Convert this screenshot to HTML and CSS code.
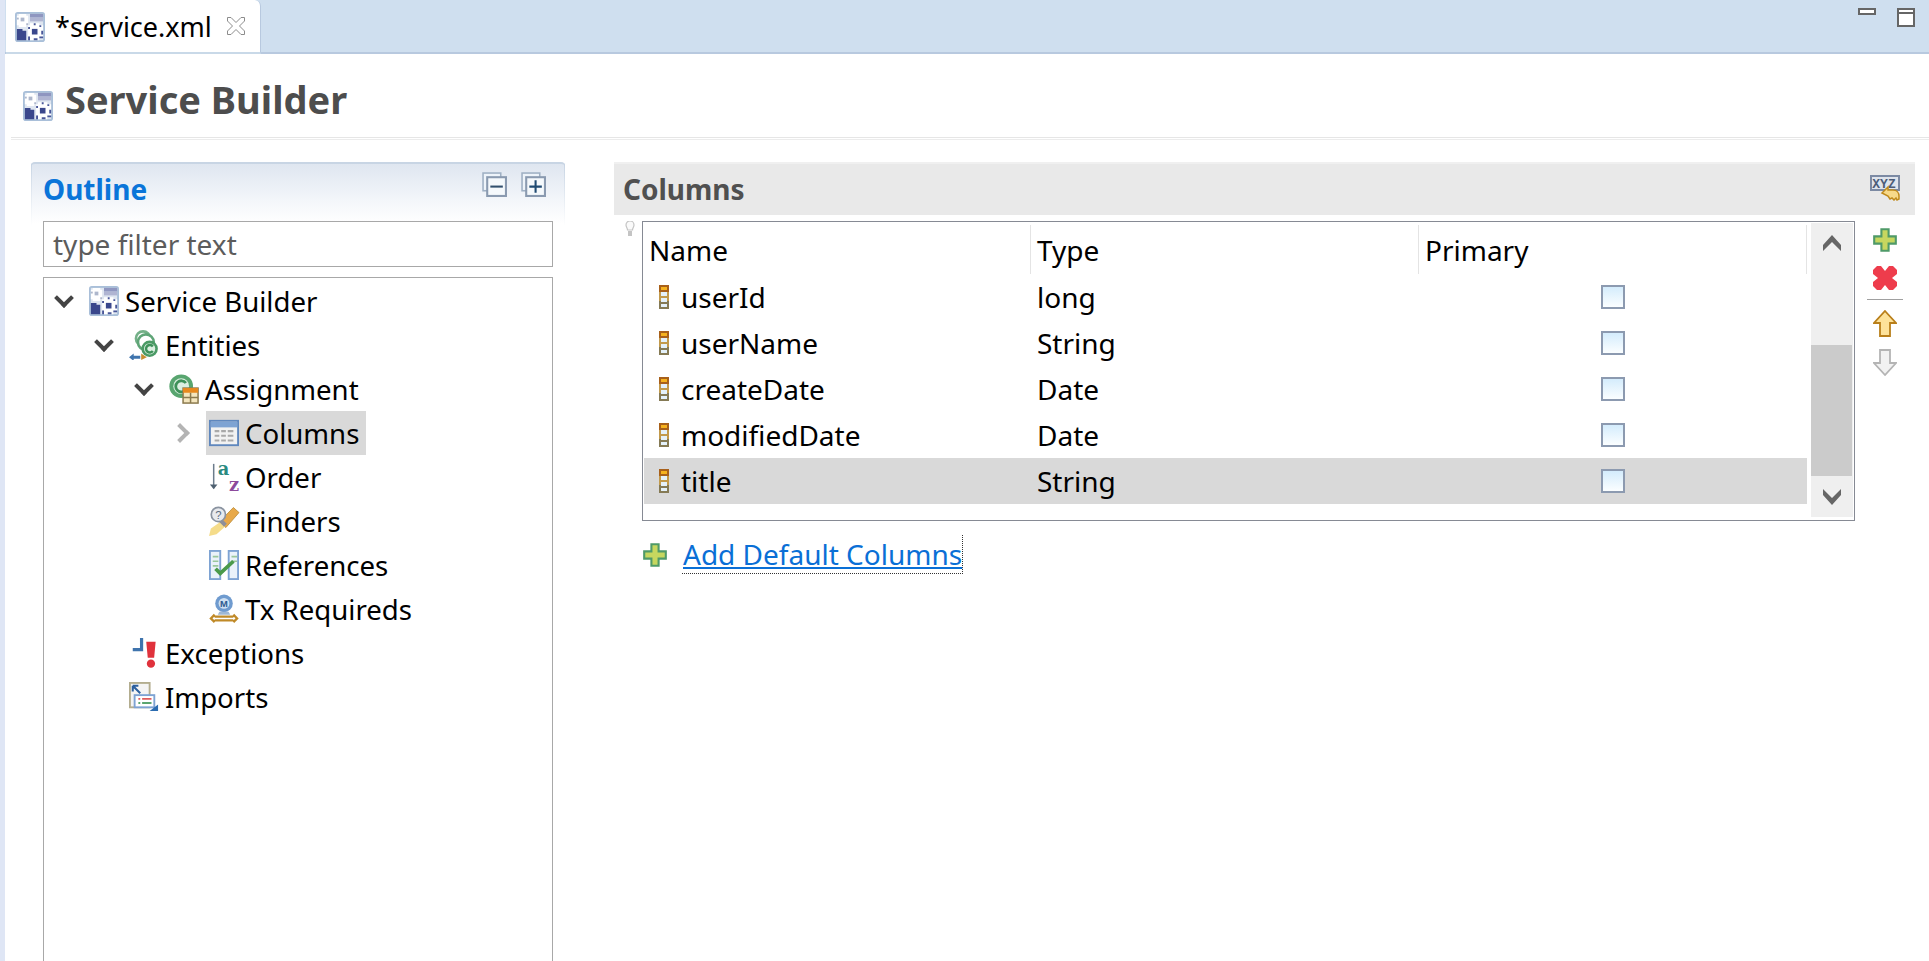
FILE: index.html
```html
<!DOCTYPE html>
<html lang="en">

<head>
    <meta charset="UTF-8">
    <title>service.xml</title>
    <link rel="stylesheet" href="styles.css">
</head>

<body>
    <svg class="defs" width="0" height="0">
        <symbol id="i-gears" viewBox="0 0 16 16">
            <rect x="0" y="0" width="16" height="16" rx="1.500" fill="#a9bfd9" />
            <rect x="1" y="1" width="14" height="14" fill="#dfe6f0" />
            <rect x="8" y="1" width="7" height="2" fill="#8f96c0" />
            <rect x="8" y="3" width="7" height="2" fill="#b0b5d2" />
            <path d="M2 1h4v1h1v5H6v1H2V7H1V2h1z" fill="#fff" />
            <rect x="3" y="3" width="2" height="2" fill="#aeb7cc" />
            <rect x="1" y="3" width="1" height="1" fill="#aeb7cc" />
            <rect x="6" y="6" width="1" height="1" fill="#aeb7cc" />
            <path d="M1 9h3v1h2v5H1z" fill="#3a478c" />
            <path d="M8 6h5v1h2v6h-2v2H8v-2H7V7h1z" fill="#fff" />
            <path d="M9 9h3v3H9z" fill="#3a478c" />
            <path d="M7 8h1v1H7zM13 7h1v1h-1zM14 10h1v2h-1zM10 6h1v1h-1zM7 13h1v2H7zM10 14h2v1h-2zM13 13h2v1h-2z" fill="#4a5799" />
        </symbol>
        <symbol id="i-entities" viewBox="0 0 16 16">
            <circle cx="7.500" cy="4.500" r="3.800" fill="#fff" stroke="#74b088" stroke-width="1.400" />
            <circle cx="9" cy="6.500" r="4.200" fill="#fff" stroke="#5fa577" stroke-width="1.400" />
            <circle cx="11" cy="10" r="4.400" fill="#4b9a65" />
            <circle cx="11" cy="10" r="3" fill="#dcefe1" />
            <path d="M12.700 8.800a2 2 0 1 0 0 2.400" fill="none" stroke="#3e9159" stroke-width="1.300" />
            <path d="M0 14.500l2.500-2v1.200H6v1.600H2.500V16.500z" fill="#3f74ad" />
            <path d="M6.500 12.500l3 2-3 1.500z" fill="#c88f32" />
        </symbol>
        <symbol id="i-assignment" viewBox="0 0 16 16">
            <circle cx="6.500" cy="6.500" r="6.300" fill="#58a56f" />
            <circle cx="6.500" cy="6.500" r="4.200" fill="#dcefe1" />
            <path d="M9 4.800a3 3 0 1 0 0 3.600" fill="none" stroke="#3e9159" stroke-width="1.500" />
            <rect x="7.500" y="7.500" width="8" height="8" fill="#f4e6be" stroke="#8b7a4e" stroke-width=".8" />
            <rect x="7.500" y="7.500" width="8" height="2.500" fill="#e8891e" />
            <path d="M11.500 10v5.500M7.500 12.500h8" stroke="#8b7a4e" stroke-width=".8" />
        </symbol>
        <symbol id="i-table" viewBox="0 0 16 16">
            <rect x=".5" y="1.500" width="15" height="13" fill="#f2f2f2" stroke="#5f87bd" />
            <rect x="1" y="2" width="14" height="3" fill="#7ea3d3" />
            <path d="M3 7h2.500M6.500 7H9M10 7h3M3 9.500h2.500M6.500 9.500H9M10 9.500h3M3 12h2.500M6.500 12H9M10 12h3" stroke="#a9a9a9" stroke-width="1.100" />
        </symbol>
        <symbol id="i-references" viewBox="0 0 16 16">
            <rect x=".5" y=".5" width="5.500" height="15" fill="#eaf2fa" stroke="#7ea3d3" />
            <rect x="10.500" y=".5" width="5" height="15" fill="#eaf2fa" stroke="#7ea3d3" />
            <path d="M2 3.500h3M2 6h3M2 8.500h3M12 3.500h3M12 6h3" stroke="#9ac79c" stroke-width=".9" />
            <path d="M3.500 10l2.500 2.500L13 6" fill="none" stroke="#4b9a4b" stroke-width="2" />
        </symbol>
        <symbol id="i-exceptions" viewBox="0 0 16 16">
            <path d="M6.700 0v6.200H2" fill="none" stroke="#3f74ad" stroke-width="1.700" />
            <path d="M9.200 2h5l-.8 8.500H10z" fill="#e0323c" />
            <circle cx="11.700" cy="13.700" r="2.200" fill="#e0323c" />
        </symbol>
        <symbol id="i-imports" viewBox="0 0 16 16">
            <rect x=".5" y=".5" width="10.500" height="13" fill="#f4f4f4" stroke="#b3ad8f" />
            <path d="M2 2l4 4M2 2h3M2 2v3" fill="none" stroke="#2b5f9e" stroke-width="1.100" />
            <rect x="3" y="7" width="10.500" height="6.500" fill="#fff" stroke="#7ea3d3" />
            <path d="M5 9h1M7 9h5" stroke="#e05a5a" />
            <path d="M5 11.200h1M7 11.200h5" stroke="#5aa56f" />
            <path d="M15.500 12v3.500H11z" fill="#2b6cb0" />
        </symbol>
        <symbol id="i-col" viewBox="0 0 10 24">
            <rect x="0" y="0" width="10" height="24" fill="#857a55" />
            <rect x="0" y="0" width="10" height="8" fill="#a8601a" />
            <rect x="2" y="2" width="6" height="3" fill="#f5b21e" />
            <rect x="0" y="7" width="10" height="9" fill="#c29a4c" />
            <rect x="2" y="7" width="6" height="4" fill="#e4f1fa" />
            <rect x="2" y="13" width="6" height="4" fill="#e4f1fa" />
            <rect x="2" y="19" width="6" height="3" fill="#e4f1fa" />
        </symbol>
        <symbol id="i-plus" viewBox="0 0 8 8">
            <path d="M2.800 .4h2.400v2.400h2.400v2.400H5.200v2.400H2.800V5.200H.4V2.800h2.400z" fill="#c6d75f" stroke="#4f9a68" stroke-width=".7" />
        </symbol>
    </svg>

    <div class="tabbar">
        <div class="tab">
            <svg class="icon"><use href="#i-gears" /></svg>
            <span class="tab-label">*service.xml</span>
            <svg class="tab-close" viewBox="0 0 20 20">
                <path d="M1.500 1.500h3.500L10 6.500l5-5h3.500v3.500L13.500 10l5 5v3.500H15L10 13.500l-5 5H1.500V15l5-5-5-5z" fill="#fff" stroke="#8c8c8c" stroke-width="1" />
            </svg>
        </div>
        <div class="win-buttons">
            <span class="win-min"></span>
            <span class="win-max"></span>
        </div>
    </div>

    <div class="content">
        <div class="page-title">
            <svg class="icon"><use href="#i-gears" /></svg>
            <h1>Service Builder</h1>
        </div>
        <div class="rule"></div>

        <div class="panes">
            <section class="outline">
                <div class="outline-head">
                    <h2>Outline</h2>
                    <div class="outline-tools">
                        <svg class="tool-icon" viewBox="0 0 24 24">
                            <rect x="1" y="1" width="17" height="17" fill="#eef4fa" stroke="#9fb0c4" stroke-width="1.500" />
                            <rect x="5" y="5" width="18" height="18" fill="#f5f9fc" stroke="#8a9ab0" stroke-width="2" />
                            <path d="M8 14h12" stroke="#33506e" stroke-width="2" />
                        </svg>
                        <svg class="tool-icon" viewBox="0 0 24 24">
                            <rect x="1" y="1" width="17" height="17" fill="#eef4fa" stroke="#9fb0c4" stroke-width="1.500" />
                            <rect x="5" y="5" width="18" height="18" fill="#f5f9fc" stroke="#8a9ab0" stroke-width="2" />
                            <path d="M8 14h12M14 8v12" stroke="#1f4a72" stroke-width="2" />
                        </svg>
                    </div>
                </div>
                <div class="filter">type filter text</div>
                <div class="tree">
                    <ul>
                        <li>
                            <div class="node"><span class="twist open"></span><svg class="icon"><use href="#i-gears" /></svg><span class="node-label">Service Builder</span></div>
                            <ul>
                                <li>
                                    <div class="node"><span class="twist open"></span><svg class="icon"><use href="#i-entities" /></svg><span class="node-label">Entities</span></div>
                                    <ul>
                                        <li>
                                            <div class="node"><span class="twist open"></span><svg class="icon"><use href="#i-assignment" /></svg><span class="node-label">Assignment</span></div>
                                            <ul>
                                                <li><div class="node selected"><span class="twist closed"></span><span class="node-sel"><svg class="icon"><use href="#i-table" /></svg><span class="node-label">Columns</span></span></div></li>
                                                <li><div class="node"><span class="twist"></span><span class="node-sel">
                                                    <svg class="icon icon-open" viewBox="0 0 16 16">
                                                        <path d="M2.500 1v13" stroke="#6c7c8c" stroke-width=".8" />
                                                        <path d="M.5 12h4l-2 2.500z" fill="#4f6070" />
                                                        <text x="4.600" y="7" class="icon-a">a</text>
                                                        <text x="10.700" y="15.500" class="icon-z">z</text>
                                                    </svg><span class="node-label">Order</span></span></div></li>
                                                <li><div class="node"><span class="twist"></span><span class="node-sel">
                                                    <svg class="icon icon-open" viewBox="0 0 16 16">
                                                        <path d="M5.500 8.500L13 .8l3 2.700-7 8z" fill="#e8a94a" stroke="#b5852e" stroke-width=".4" />
                                                        <path d="M0 16l1-4 5-3.500L8.500 11 4 15z" fill="#f5dc8a" />
                                                        <path d="M5 8l3 3 1.500-1.500-3-3z" fill="#8f8f98" />
                                                        <circle cx="5" cy="4.500" r="3.800" fill="#e8eaee" stroke="#8a93a0" stroke-width=".9" />
                                                        <text x="5" y="6.800" class="icon-q">?</text>
                                                    </svg><span class="node-label">Finders</span></span></div></li>
                                                <li><div class="node"><span class="twist"></span><span class="node-sel"><svg class="icon"><use href="#i-references" /></svg><span class="node-label">References</span></span></div></li>
                                                <li><div class="node"><span class="twist"></span><span class="node-sel">
                                                    <svg class="icon icon-open" viewBox="0 0 16 16">
                                                        <circle cx="8" cy="5" r="4.700" fill="#6f9bcf" />
                                                        <circle cx="8" cy="5" r="2.900" fill="#cfe0f2" />
                                                        <text x="8" y="6.800" class="icon-m">M</text>
                                                        <path d="M5.500 9.500h5l.8 1.500H4.700z" fill="#9fb8d5" />
                                                        <path d="M3 12h10M3 14h10M3 11l-2 2 2 2M13 11l2 2-2 2" fill="none" stroke="#c08a28" stroke-width="1.200" />
                                                    </svg><span class="node-label">Tx Requireds</span></span></div></li>
                                            </ul>
                                        </li>
                                    </ul>
                                </li>
                                <li><div class="node"><span class="twist"></span><svg class="icon"><use href="#i-exceptions" /></svg><span class="node-label">Exceptions</span></div></li>
                                <li><div class="node"><span class="twist"></span><svg class="icon"><use href="#i-imports" /></svg><span class="node-label">Imports</span></div></li>
                            </ul>
                        </li>
                    </ul>
                </div>
            </section>

            <section class="columns">
                <div class="columns-head">
                    <h2>Columns</h2>
                    <svg class="xyz" viewBox="0 0 30 26">
                        <rect x="1" y="1" width="28" height="14" fill="#dfe4ec" stroke="#7c8aa3" stroke-width="2" />
                        <text x="14" y="12.500" class="icon-xyz">XYZ</text>
                        <path d="M12 18l6-6v3h5c4 0 6 3 6 6v3l-2 1-1-2-2 2-2-2-2 1-2-3z" fill="#f7d98a" stroke="#c08a1c" stroke-width="1.500" />
                    </svg>
                </div>
                <div class="columns-body">
                    <svg class="bulb" viewBox="0 0 10 16">
                        <path d="M1 4a4 4 0 0 1 8 0c0 2-1.500 3-1.500 5h-5C2.500 7 1 6 1 4z" fill="#fafafa" stroke="#c4c4c4" stroke-width="1.200" />
                        <rect x="3" y="10" width="4" height="5" fill="#c4c4c4" />
                    </svg>
                    <div class="table-wrap">
                        <div class="table-main">
                            <div class="row head">
                                <div class="cell name">Name</div>
                                <div class="cell type">Type</div>
                                <div class="cell primary">Primary</div>
                            </div>
                            <div class="row">
                                <div class="cell name"><svg class="col-icon"><use href="#i-col" /></svg>userId</div>
                                <div class="cell type">long</div>
                                <div class="cell primary"><span class="check"></span></div>
                            </div>
                            <div class="row">
                                <div class="cell name"><svg class="col-icon"><use href="#i-col" /></svg>userName</div>
                                <div class="cell type">String</div>
                                <div class="cell primary"><span class="check"></span></div>
                            </div>
                            <div class="row">
                                <div class="cell name"><svg class="col-icon"><use href="#i-col" /></svg>createDate</div>
                                <div class="cell type">Date</div>
                                <div class="cell primary"><span class="check"></span></div>
                            </div>
                            <div class="row">
                                <div class="cell name"><svg class="col-icon"><use href="#i-col" /></svg>modifiedDate</div>
                                <div class="cell type">Date</div>
                                <div class="cell primary"><span class="check"></span></div>
                            </div>
                            <div class="row current">
                                <div class="cell name"><svg class="col-icon"><use href="#i-col" /></svg>title</div>
                                <div class="cell type">String</div>
                                <div class="cell primary"><span class="check"></span></div>
                            </div>
                        </div>
                        <div class="scrollbar">
                            <svg class="sb-arrow" viewBox="0 0 18 16"><path d="M0 10L9 0l9 10v6L9 7l-9 9z" fill="#666" /></svg>
                            <div class="sb-track"><div class="sb-thumb"></div></div>
                            <svg class="sb-arrow" viewBox="0 0 18 16"><path d="M0 0l9 9 9-9v6L9 16 0 6z" fill="#666" /></svg>
                        </div>
                    </div>
                    <div class="side-tools">
                        <svg class="side-icon"><use href="#i-plus" /></svg>
                        <svg class="side-icon" viewBox="0 0 24 24">
                            <path d="M0 4L4 0h4l4 5 4-5h4l4 4v4l-5 4 5 4v4l-4 4h-4l-4-5-4 5H4l-4-4v-4l5-4-5-4z" fill="#ee3c4c" />
                        </svg>
                        <div class="side-sep"></div>
                        <svg class="side-arrow" viewBox="0 0 24 28">
                            <path d="M12 1l11 12h-6v13H7V13H1z" fill="#fde29a" stroke="#b97f1a" stroke-width="1.800" />
                        </svg>
                        <svg class="side-arrow" viewBox="0 0 24 28">
                            <path d="M12 27L1 15h6V2h10v13h6z" fill="#f2f2f2" stroke="#b4b4b4" stroke-width="1.800" />
                        </svg>
                    </div>
                </div>
                <div class="add-default">
                    <svg class="side-icon"><use href="#i-plus" /></svg>
                    <a class="add-link" href="#">Add Default Columns</a>
                </div>
            </section>
        </div>
    </div>
</body>

</html>
```

FILE: styles.css
```css
html, body {
    height: 100%;
    margin: 0;
    overflow: hidden;
}

body {
    font-family: "Noto Sans", "Open Sans", sans-serif;
    background-color: white;
    color: #000;
    font-size: 28px;
    padding-left: 5px;
    box-sizing: border-box;
    background-image: linear-gradient(90deg, #dfe6f5 5px, #c8ccd4 5px);
    background-size: 6px 100%;
    background-repeat: no-repeat;
    display: flex;
    flex-direction: column;
}

.defs {
    position: absolute;
}

.icon {
    width: 30px;
    height: 30px;
    flex: none;
}

.icon-open {
    overflow: visible;
}

.icon-a, .icon-z {
    font-family: "DejaVu Serif", serif;
    font-weight: bold;
    font-size: 9.500px;
}

.icon-a { fill: #2a8a80; }
.icon-z { fill: #8d4a9c; }

.icon-q, .icon-m {
    font-family: "Liberation Sans", sans-serif;
    font-size: 6px;
    text-anchor: middle;
    fill: #5b6b80;
}

.icon-m {
    font-size: 5px;
    font-weight: bold;
    fill: #2c5a90;
}

.icon-xyz {
    font-family: "Liberation Mono", monospace;
    font-weight: bold;
    font-size: 13px;
    text-anchor: middle;
    fill: #4c5c78;
}

/* tab strip */
.tabbar {
    height: 52px;
    flex: none;
    background-color: #cfdfef;
    border-bottom: 2px solid #b8c9df;
    display: flex;
    justify-content: space-between;
}

.tab {
    width: 255px;
    height: 54px;
    margin-left: 1px;
    box-sizing: border-box;
    padding: 12px 14px 0 9px;
    background-color: white;
    border-radius: 0 6px 0 0;
    border-right: 1px solid #b8c9df;
    border-bottom: 2px solid #c9d9e8;
    display: flex;
    align-items: flex-start;
}

.tab-label {
    margin-left: 10px;
    font-size: 27px;
    line-height: 30px;
}

.tab-close {
    width: 20px;
    height: 20px;
    margin: 4px 0 0 auto;
}

.win-buttons {
    display: flex;
    align-items: flex-start;
    gap: 21px;
    padding: 8px 14px 0 0;
}

.win-min, .win-max {
    display: block;
    width: 18px;
    box-sizing: border-box;
    border: 2px solid #666;
    background-color: white;
}

.win-min {
    height: 7px;
}

.win-max {
    height: 19px;
    background-image: linear-gradient(white 2px, #666 2px, #666 4px, white 4px);
}

.content {
    flex: 1;
    min-height: 0;
    background-color: white;
    display: flex;
    flex-direction: column;
}

.page-title {
    height: 83px;
    box-sizing: border-box;
    padding: 0 0 0 18px;
    display: flex;
    align-items: center;
    gap: 12px;
}

.page-title .icon {
    margin-top: 20px;
}

h1 {
    margin: 6px 0 0;
    font-size: 38px;
    font-weight: bold;
    color: #4d4d4d;
    line-height: 48px;
}

.rule {
    height: 1px;
    margin-left: 6px;
    border-top: 1px solid #e6e6e6;
    border-bottom: 1px solid #ececec;
    flex: none;
}

.panes {
    flex: 1;
    min-height: 0;
    display: flex;
    padding-top: 22px;
}

/* left pane */
.outline {
    width: 536px;
    margin-left: 25px;
    display: flex;
    flex-direction: column;
    box-sizing: border-box;
    padding: 0 12px;
    border-radius: 5px 5px 0 0;
    border-top: 2px solid #c8d5e4;
    border-left: 1px solid transparent;
    border-right: 1px solid transparent;
    background-image:
        linear-gradient(#c8d5e4, #ffffff),
        linear-gradient(#c8d5e4, #ffffff),
        linear-gradient(#dfe6f0, #f3f6fa 36px, #ffffff 60px);
    background-size: 1px 62px, 1px 62px, 100% 62px;
    background-position: left top, right top, left top;
    background-repeat: no-repeat;
}

.outline-head {
    height: 57px;
    flex: none;
    display: flex;
    justify-content: space-between;
    align-items: flex-start;
    padding-top: 7px;
    box-sizing: border-box;
}

h2 {
    margin: 0;
    font-size: 28px;
    font-weight: bold;
    line-height: 36px;
}

.outline h2 {
    color: #0a75d9;
}

.outline-tools {
    display: flex;
    gap: 14px;
    padding: 1px 7px 0 0;
}

.tool-icon {
    width: 25px;
    height: 25px;
}

.filter {
    height: 46px;
    flex: none;
    box-sizing: border-box;
    border: 1px solid #a8a8a8;
    padding-left: 9px;
    line-height: 44px;
    color: #5c5c5c;
    background-color: white;
}

.tree {
    flex: 1;
    margin-top: 10px;
    border: 1px solid #a8a8a8;
    border-bottom: none;
    padding-top: 1px;
    font-size: 27.6px;
}

.tree ul {
    list-style: none;
    margin: 0;
    padding: 0 0 0 40px;
}

.tree > ul {
    padding-left: 0;
}

.node {
    height: 44px;
    display: flex;
    align-items: center;
}

.twist {
    width: 45px;
    height: 44px;
    flex: none;
    position: relative;
}

.twist.open::before, .twist.closed::before {
    content: "";
    position: absolute;
    width: 10px;
    height: 10px;
    border-right: 4px solid #444;
    border-bottom: 4px solid #444;
    left: 13px;
    top: 12px;
    transform: rotate(45deg);
}

.twist.closed::before {
    border-color: #b4b4b4;
    left: 9px;
    top: 15px;
    transform: rotate(-45deg);
}

.node .icon {
    margin-right: 6px;
}

.node-sel {
    display: flex;
    align-items: center;
    height: 44px;
    margin-left: -3px;
    padding: 0 7px 0 3px;
}

.selected .node-sel {
    background-color: #d9d9d9;
}

/* right pane */
.columns {
    flex: 1;
    min-width: 0;
    margin: 0 14px 0 48px;
    display: flex;
    flex-direction: column;
}

.columns-head {
    height: 51px;
    flex: none;
    background-color: #e9e9e9;
    border-top: 2px solid #f0f0f0;
    display: flex;
    justify-content: space-between;
    align-items: center;
    padding: 0 15px 0 9px;
}

.columns-head h2 {
    color: #505050;
    margin-bottom: 2px;
}

.xyz {
    width: 30px;
    height: 26px;
    margin-bottom: 4px;
}

.columns-body {
    display: flex;
    align-items: flex-start;
    margin-top: 6px;
}

.bulb {
    width: 10px;
    height: 16px;
    margin: 0 7px 0 11px;
    flex: none;
}

.table-wrap {
    width: 1213px;
    height: 300px;
    box-sizing: border-box;
    border: 1px solid #868a94;
    display: flex;
    padding: 1px 1px 3px 1px;
}

.table-main {
    flex: 1;
    min-width: 0;
}

.row {
    height: 46px;
    display: grid;
    grid-template-columns: 387px 388px 1fr;
    align-items: center;
}

.row.head {
    height: 51px;
}

.row.current {
    background-color: #d9d9d9;
}

.cell {
    padding-left: 6px;
    display: flex;
    align-items: center;
    height: 100%;
}

.cell.name {
    padding-left: 5px;
}

.head .cell {
    position: relative;
    padding-top: 2px;
    box-sizing: border-box;
}

.head .cell::after {
    content: "";
    position: absolute;
    right: 0;
    top: 2px;
    height: 49px;
    width: 1px;
    background-color: #e4e4e4;
}

.col-icon {
    width: 10px;
    height: 24px;
    margin: 0 12px 0 10px;
    flex: none;
}

.cell.primary:not(.head .cell) {
    padding-left: 0;
    justify-content: center;
    padding-right: 0;
}

.check {
    display: block;
    width: 24px;
    height: 24px;
    box-sizing: border-box;
    border: 2px solid #8c9ab0;
    background-image: linear-gradient(#d4ecfc, #fbfeff);
}

.scrollbar {
    width: 42px;
    margin-left: 4px;
    flex: none;
    background-color: #efefef;
    display: flex;
    flex-direction: column;
    align-items: center;
}

.sb-arrow {
    width: 18px;
    height: 16px;
    margin: 12px 0;
    flex: none;
}

.sb-track {
    flex: 1;
    width: 100%;
    padding-top: 82px;
    box-sizing: border-box;
}

.sb-thumb {
    height: 131px;
    margin-right: 1px;
    background-color: #cbcbcb;
}

.side-tools {
    width: 36px;
    margin-left: 12px;
    padding-top: 7px;
    display: flex;
    flex-direction: column;
    align-items: center;
}

.side-icon {
    width: 24px;
    height: 24px;
    flex: none;
}

.side-tools .side-icon {
    margin-bottom: 14px;
}

.side-sep {
    width: 36px;
    height: 1px;
    background-color: #a0a0a0;
    margin: -5px 0 10px;
}

.side-arrow {
    width: 24px;
    height: 28px;
    margin-bottom: 10px;
}

.add-default {
    display: flex;
    align-items: center;
    gap: 15px;
    margin: 14px 0 0 29px;
}

.add-link {
    color: #0a6fd6;
    text-decoration: underline;
    border-right: 1px dotted #333;
    border-bottom: 1px dotted #333;
    line-height: 38px;
    padding-left: 1px;
}
```
